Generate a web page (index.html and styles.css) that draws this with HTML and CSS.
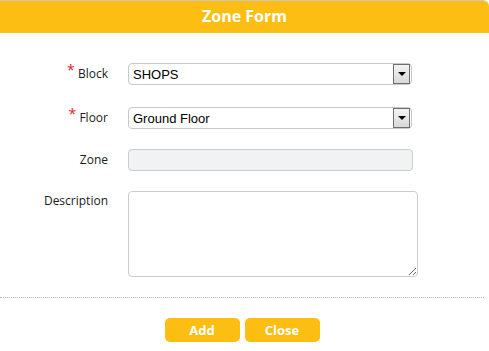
FILE: index.html
```html
<!DOCTYPE html>
<html lang="en">
<head>
    <meta charset="UTF-8">
    <title>Zone Form</title>
    <link rel="stylesheet" href="styles.css">
</head>
<body>

<div class="dialog">
    <div class="dialog-title">Zone Form</div>

    <form class="zone-form">
        <div class="form-row form-row-first">
            <label class="form-label"><span class="req">*</span> Block</label>
            <div class="select-wrap">
                <select class="form-select">
                    <option>SHOPS</option>
                </select>
                <span class="select-arrow"></span>
            </div>
        </div>

        <div class="form-row">
            <label class="form-label"><span class="req">*</span> Floor</label>
            <div class="select-wrap">
                <select class="form-select">
                    <option>Ground Floor</option>
                </select>
                <span class="select-arrow"></span>
            </div>
        </div>

        <div class="form-row">
            <label class="form-label">Zone</label>
            <input type="text" class="form-input" disabled>
        </div>

        <div class="form-row form-row-top">
            <label class="form-label">Description</label>
            <textarea class="form-textarea"></textarea>
        </div>
    </form>

    <div class="form-actions">
        <button class="btn">Add</button>
        <button class="btn">Close</button>
    </div>
</div>

</body>
</html>
```

FILE: styles.css
```css
body {
    margin: 0;
    background: #fff;
    font-family: "Open Sans", Arial, sans-serif;
}

.dialog {
    border-top: 1px solid #c9c9c9;
    border-top-right-radius: 6px;
    overflow: hidden;
    height: 350px;
}

.dialog-title {
    background: #fdbe14;
    color: #fff;
    font-weight: bold;
    font-size: 16px;
    text-align: center;
    height: 32px;
    line-height: 31px;
}

.zone-form {
    padding-top: 30px;
}

.form-row {
    display: grid;
    grid-template-columns: 108px auto;
    column-gap: 20px;
    align-items: center;
    margin-bottom: 20px;
}

.form-row-first {
    margin-bottom: 22px;
}

.form-row-top {
    align-items: start;
}

.form-label {
    text-align: right;
    font-size: 12px;
    line-height: 16px;
    color: #1a1a1a;
}

.form-row-top .form-label {
    padding-top: 2px;
}

.req {
    color: #e3261c;
    font-size: 14px;
    vertical-align: 3px;
    line-height: 0;
}

.select-wrap {
    position: relative;
    width: 284px;
    height: 22px;
}

.form-select {
    appearance: none;
    -webkit-appearance: none;
    display: block;
    width: 100%;
    height: 22px;
    box-sizing: border-box;
    border: 1px solid #c8c8c8;
    border-radius: 4px;
    background: #fff;
    font-family: "Liberation Sans", Arial, sans-serif;
    font-size: 13px;
    color: #000;
    padding: 0 4px;
    margin: 0;
}

.select-arrow {
    position: absolute;
    top: 1px;
    right: 2px;
    width: 15px;
    height: 18px;
    border: 1px solid #6f6f6f;
    background: linear-gradient(#f4f4f4, #d9d9d9);
    pointer-events: none;
}

.select-arrow::after {
    content: "";
    position: absolute;
    left: 4px;
    top: 7px;
    border-left: 4px solid transparent;
    border-right: 4px solid transparent;
    border-top: 4px solid #000;
}

.form-input {
    display: block;
    width: 285px;
    height: 22px;
    box-sizing: border-box;
    border: 1px solid #cccccc;
    border-radius: 4px;
    background: #f1f2f4;
    margin: 0;
}

.form-textarea {
    width: 290px;
    height: 86px;
    box-sizing: border-box;
    border: 1px solid #cccccc;
    border-radius: 4px;
    margin: 0;
    display: block;
}

.form-actions {
    border-top: 1px dotted #bcbcbc;
    margin: 0 5px 0 0;
    padding-top: 20px;
    display: flex;
    justify-content: center;
    gap: 5px;
}

.btn {
    background: #fdbe14;
    color: #fff;
    border: none;
    border-radius: 5px;
    width: 75px;
    height: 24px;
    font-family: "Open Sans", Arial, sans-serif;
    font-weight: bold;
    font-size: 13px;
    padding: 0;
    cursor: pointer;
}
```
